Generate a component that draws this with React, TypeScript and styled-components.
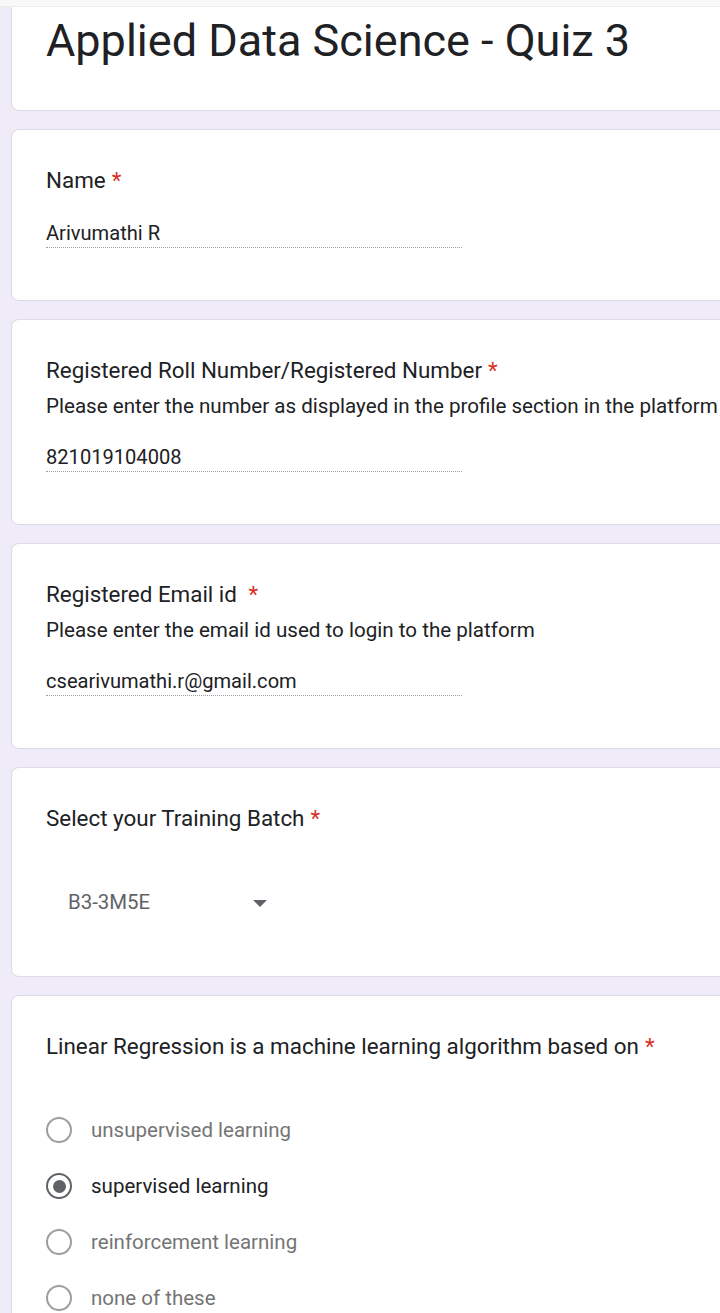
import React from "react";
import styled, { createGlobalStyle } from "styled-components";

const Global = createGlobalStyle`
  html, body { margin: 0; padding: 0; overflow-x: hidden; }
  body {
    background: #f0ebf8;
    font-family: Roboto, "Noto Sans", Arial, sans-serif;
    color: #202124;
  }
`;

const TopStrip = styled.div`
  height: 6px;
  background: #f8f8f8;
  border-bottom: 1px solid #ececec;
  position: relative;
  z-index: 1;
`;

const Page = styled.div`
  padding: 0 0 40px 11px;
  display: flex;
  flex-direction: column;
  gap: 18px;
  margin-top: -7px;
`;

const Card = styled.div<{ $head?: boolean; $bottom?: number }>`
  width: 760px;
  box-sizing: border-box;
  background: #fff;
  border: 1px solid #dadce0;
  border-radius: 8px;
  padding: ${(p) => (p.$head ? "7px 34px 36px" : `35px 34px ${p.$bottom ?? 52}px`)};
`;

const Title = styled.h1`
  margin: 0;
  font-weight: 400;
  font-size: 45px;
  line-height: 66px;
  color: #202124;
`;

const Label = styled.div`
  font-size: 22.4px;
  line-height: 30px;
  color: #202124;
`;

const Star = styled.span`
  color: #d93025;
  margin-left: 6px;
`;

const Desc = styled.div`
  margin-top: 8px;
  font-size: 20.6px;
  line-height: 26px;
  color: #202124;
  white-space: nowrap;
`;

const Value = styled.div`
  margin-top: 26px;
  width: 416px;
  font-size: 20.1px;
  line-height: 24px;
  padding-bottom: 2px;
  border-bottom: 1px dotted #9aa0a6;
  color: #202124;
`;

const SelectRow = styled.div`
  margin-top: 57px;
  margin-left: 22px;
  width: 199px;
  display: flex;
  align-items: center;
  justify-content: space-between;
  font-size: 20.4px;
  line-height: 24px;
  color: #5f6368;
`;

const Caret = styled.span`
  width: 0;
  height: 0;
  border-left: 7px solid transparent;
  border-right: 7px solid transparent;
  border-top: 7px solid #5f6368;
  margin-top: 2px;
`;

const Options = styled.div`
  margin-top: 41px;
  display: flex;
  flex-direction: column;
`;

const OptionRow = styled.div<{ $sel?: boolean }>`
  height: 56px;
  display: flex;
  align-items: center;
  gap: 19px;
  font-size: 20.5px;
  color: ${(p) => (p.$sel ? "#202124" : "#757575")};
`;

const Radio = styled.span<{ $sel?: boolean }>`
  width: 26px;
  height: 26px;
  box-sizing: border-box;
  border-radius: 50%;
  border: 2.5px solid ${(p) => (p.$sel ? "#5f6368" : "#9e9e9e")};
  display: flex;
  align-items: center;
  justify-content: center;
  &::after {
    content: "";
    display: ${(p) => (p.$sel ? "block" : "none")};
    width: 13px;
    height: 13px;
    border-radius: 50%;
    background: #5f6368;
  }
`;

const options = [
  { text: "unsupervised learning", sel: false },
  { text: "supervised learning", sel: true },
  { text: "reinforcement learning", sel: false },
  { text: "none of these", sel: false },
];

export default function App() {
  return (
    <>
      <Global />
      <TopStrip />
      <Page>
        <Card $head>
          <Title>Applied Data Science - Quiz 3</Title>
        </Card>
        <Card>
          <Label>
            Name<Star>*</Star>
          </Label>
          <Value>Arivumathi R</Value>
        </Card>
        <Card>
          <Label>
            Registered Roll Number/Registered Number<Star>*</Star>
          </Label>
          <Desc>Please enter the number as displayed in the profile section in the platform</Desc>
          <Value>821019104008</Value>
        </Card>
        <Card>
          <Label>
            Registered Email id <Star>*</Star>
          </Label>
          <Desc>Please enter the email id used to login to the platform</Desc>
          <Value>csearivumathi.r@gmail.com</Value>
        </Card>
        <Card $bottom={62}>
          <Label>
            Select your Training Batch<Star>*</Star>
          </Label>
          <SelectRow>
            <span>B3-3M5E</span>
            <Caret />
          </SelectRow>
        </Card>
        <Card>
          <Label>
            Linear Regression is a machine learning algorithm based on<Star>*</Star>
          </Label>
          <Options>
            {options.map((o) => (
              <OptionRow key={o.text} $sel={o.sel}>
                <Radio $sel={o.sel} />
                <span>{o.text}</span>
              </OptionRow>
            ))}
          </Options>
        </Card>
      </Page>
    </>
  );
}
